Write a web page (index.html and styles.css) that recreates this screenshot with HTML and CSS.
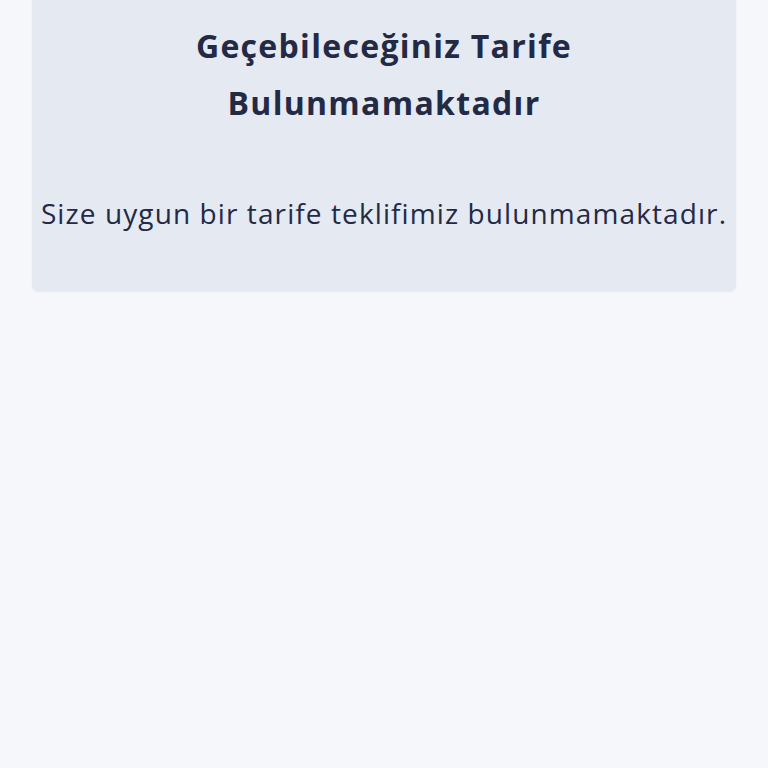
FILE: index.html
```html
<!DOCTYPE html>
<html lang="tr">

<head>
    <meta charset="UTF-8">
    <title>Tarife</title>
    <link rel="stylesheet" href="styles.css">
</head>

<body>
    <div class="content">
        <div class="tarife-kart">
            <h2>Geçebileceğiniz Tarife Bulunmamaktadır</h2>
            <p>Size uygun bir tarife teklifimiz bulunmamaktadır.</p>
        </div>
    </div>
</body>

</html>
```

FILE: styles.css
```css
body {
    margin: 0;
    font-family: "Open Sans", Lato, sans-serif;
    background-color: #f6f7fa;
    color: #232a45;
    height: 100vh;
}

.content {
    padding: 0 32px;
}

.tarife-kart {
    margin-top: -20px;
    padding: 37px 0 58px;
    background-color: #e5e9f1;
    border-radius: 6px;
    box-shadow: 0 1px 2px rgba(0, 0, 0, 0.06);
    text-align: center;
}

.tarife-kart h2 {
    max-width: 440px;
    margin: 0 auto;
    font-size: 32px;
    font-weight: bold;
    line-height: 57px;
    letter-spacing: 1.3px;
}

.tarife-kart p {
    margin: 62px 0 0;
    font-size: 28px;
    line-height: 40px;
    letter-spacing: 1.1px;
}
```
